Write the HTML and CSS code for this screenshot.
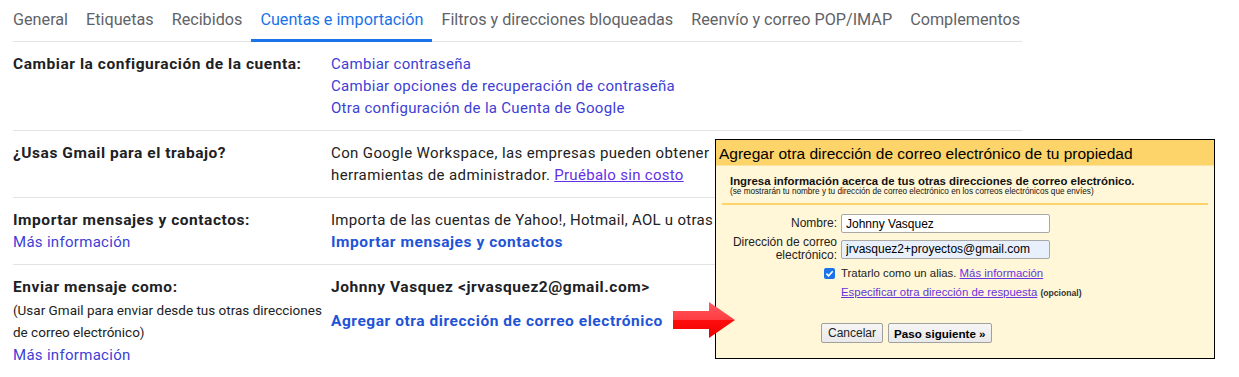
FILE: index.html
```html
<!DOCTYPE html>
<html lang="es">
<head>
    <meta charset="UTF-8">
    <title>Configuración - Cuentas e importación</title>
    <link rel="stylesheet" href="styles.css">
</head>
<body>
    <div class="page">
        <div class="tabbar">
            <nav class="tabs">
                <a class="tab">General</a>
                <a class="tab">Etiquetas</a>
                <a class="tab">Recibidos</a>
                <a class="tab active">Cuentas e importación</a>
                <a class="tab">Filtros y direcciones bloqueadas</a>
                <a class="tab">Reenvío y correo POP/IMAP</a>
                <a class="tab">Complementos</a>
            </nav>
        </div>

        <div class="settings">
            <div class="row">
                <div class="label"><span class="title">Cambiar la configuración de la cuenta:</span></div>
                <div class="value">
                    <a class="link">Cambiar contraseña</a><br>
                    <a class="link">Cambiar opciones de recuperación de contraseña</a><br>
                    <a class="link">Otra configuración de la Cuenta de Google</a>
                </div>
            </div>

            <div class="row">
                <div class="label"><span class="title">¿Usas Gmail para el trabajo?</span></div>
                <div class="value">
                    <span class="wide">Con Google Workspace, las empresas pueden obtener</span><br>
                    <span class="wide">herramientas de administrador.</span> <a class="link-visited">Pruébalo sin costo</a>
                </div>
            </div>

            <div class="row">
                <div class="label">
                    <span class="title">Importar mensajes y contactos:</span><br>
                    <a class="link">Más información</a>
                </div>
                <div class="value">
                    <span class="wide narrow">Importa de las cuentas de Yahoo!, Hotmail, AOL u otras</span><br>
                    <a class="link-strong">Importar mensajes y contactos</a>
                </div>
            </div>

            <div class="row">
                <div class="label">
                    <span class="title">Enviar mensaje como:</span>
                    <div class="hint">(Usar Gmail para enviar desde tus otras direcciones<br>de correo electrónico)</div>
                    <a class="link more">Más información</a>
                </div>
                <div class="value">
                    <div class="title">Johnny Vasquez &lt;jrvasquez2@gmail.com&gt;</div>
                    <a class="link-strong add-address">Agregar otra dirección de correo electrónico</a>
                </div>
            </div>
        </div>

        <div class="dialog">
            <div class="dialog-title">Agregar otra dirección de correo electrónico de tu propiedad</div>
            <div class="dialog-body">
                <div class="intro">
                    <div class="intro-head">Ingresa información acerca de tus otras direcciones de correo electrónico.</div>
                    <div class="intro-note">(se mostrarán tu nombre y tu dirección de correo electrónico en los correos electrónicos que envíes)</div>
                </div>
                <div class="rule"></div>

                <div class="form">
                    <span class="form-label">Nombre:</span>
                    <input class="field" type="text" value="Johnny Vasquez">

                    <span class="form-label">Dirección de correo<br>electrónico:</span>
                    <input class="field autofilled" type="text" value="jrvasquez2+proyectos@gmail.com">

                    <span class="check">
                        <svg width="11" height="11" viewBox="0 0 11 11"><path d="M2.4 5.6 L4.6 7.8 L8.7 3.3" fill="none" stroke="#fff" stroke-width="1.6"/></svg>
                    </span>
                    <div class="form-text">Tratarlo como un alias. <a class="dlg-link">Más información</a></div>

                    <span></span>
                    <div class="form-text"><a class="dlg-link">Especificar otra dirección de respuesta</a> <span class="optional">(opcional)</span></div>
                </div>

                <div class="actions">
                    <button class="btn">Cancelar</button>
                    <button class="btn primary">Paso siguiente »</button>
                </div>
            </div>
        </div>

        <svg class="arrow" width="63" height="37" viewBox="0 0 63 37">
            <defs>
                <linearGradient id="arrowFill" x1="0" y1="0" x2="0" y2="1">
                    <stop offset="0" stop-color="#ff5a5f"/>
                    <stop offset="0.5" stop-color="#ff3c42"/>
                    <stop offset="0.5" stop-color="#ff0d0d"/>
                    <stop offset="1" stop-color="#ee0000"/>
                </linearGradient>
            </defs>
            <polygon points="0,9 36,9 36,0 62,18 36,36 36,27 0,27" fill="url(#arrowFill)"/>
        </svg>
    </div>
</body>
</html>
```

FILE: styles.css
```css
body {
    margin: 0;
    background: #fff;
    color: #202124;
    font-family: Roboto, "Liberation Sans", Arial, sans-serif;
    overflow: hidden;
}
.page {
    position: relative;
    height: 377px;
    padding-left: 13px;
}

/* tabs */
.tabbar {
    width: 1009px;
    border-bottom: 1px solid #e3e3e3;
}
.tabs {
    display: flex;
    margin-left: -9px;
}
.tab {
    padding: 0 9px;
    line-height: 40px;
    height: 39px;
    font-size: 16.2px;
    color: #5f6368;
    border-bottom: 3px solid transparent;
    margin-bottom: -1px;
    white-space: nowrap;
}
.tab.active {
    color: #1a73e8;
    border-bottom-color: #1a73e8;
}

/* settings rows */
.settings {
    width: 1009px;
    overflow: hidden;
}
.row {
    display: grid;
    grid-template-columns: 318px 1fr;
    padding: 11px 0;
    border-top: 1px solid #e3e3e3;
    font-size: 15px;
    line-height: 22px;
}
.row:first-child {
    border-top: 0;
}
.value {
    white-space: nowrap;
    color: #222;
}
.wide {
    letter-spacing: 0.38px;
}
.wide.narrow {
    letter-spacing: 0.28px;
}
.title {
    font-weight: bold;
    font-size: 15.5px;
    letter-spacing: 0.55px;
    color: #202124;
}
.link {
    color: #3d40d6;
    letter-spacing: 0.3px;
}
.link-visited {
    color: #6430e6;
    letter-spacing: 0.3px;
    text-decoration: underline;
}
.link-strong {
    color: #1f54d6;
    font-weight: bold;
    font-size: 15.5px;
    letter-spacing: 0.55px;
}
.hint {
    font-size: 13.5px;
    line-height: 22px;
    margin-top: 1px;
    color: #222;
}
.more {
    display: block;
    margin-top: 1px;
}
.add-address {
    display: block;
    margin-top: 12px;
}

/* dialog */
.dialog {
    position: absolute;
    left: 715px;
    top: 139px;
    width: 500px;
    height: 220px;
    box-sizing: border-box;
    border: 1px solid #000;
    background: #fff7d7;
    font-family: "Liberation Sans", Arial, sans-serif;
    font-size: 12px;
    color: #000;
}
.dialog-title {
    height: 26px;
    line-height: 27px;
    padding-left: 3px;
    background: #fdd46a;
    border-bottom: 1px solid #fde3a0;
    box-sizing: border-box;
    font-size: 15.5px;
    white-space: nowrap;
}
.dialog-body {
    padding: 0 6px;
}
.intro {
    padding: 10px 8px 0;
    color: #111;
}
.intro-head {
    font-weight: bold;
    font-size: 11.4px;
    line-height: 11px;
}
.intro-note {
    font-size: 8.2px;
    line-height: 9px;
    white-space: nowrap;
}
.rule {
    height: 2px;
    margin-top: 7px;
    background: #fdd46a;
}
.form {
    display: grid;
    grid-template-columns: 115px 209px;
    grid-template-rows: 19px 26px 16px 16px;
    column-gap: 4px;
    row-gap: 3px;
    align-items: center;
    margin-top: 9px;
}
.form-label {
    text-align: right;
    line-height: 13px;
    color: #222;
}
.field {
    box-sizing: border-box;
    width: 209px;
    height: 19px;
    margin: 0;
    padding: 0 4px;
    border: 1px solid #a8a8a8;
    border-radius: 2px;
    background: #fff;
    font-family: "Liberation Sans", Arial, sans-serif;
    font-size: 12px;
    color: #000;
}
.field.autofilled {
    background: #e8f0fe;
}
.check {
    justify-self: end;
    width: 11px;
    height: 11px;
    margin-right: 2px;
    border-radius: 2px;
    background: #1a73e8;
    display: flex;
}
.form-text {
    white-space: nowrap;
    font-size: 11.4px;
    color: #222;
}
.dlg-link {
    color: #6633dd;
    text-decoration: underline;
}
.optional {
    font-size: 8.6px;
    font-weight: bold;
    color: #333;
}
.actions {
    display: flex;
    gap: 5px;
    padding-left: 99px;
    margin-top: 23px;
}
.btn {
    height: 20px;
    padding: 0 6px;
    border: 1px solid #a0a0a0;
    border-radius: 2px;
    background: linear-gradient(#f6f6f6, #e9e9e9);
    font-family: "Liberation Sans", Arial, sans-serif;
    font-size: 12px;
    color: #222;
}
.btn.primary {
    font-weight: bold;
    font-size: 11.6px;
    padding: 0 5px;
    color: #000;
}

.arrow {
    position: absolute;
    left: 673px;
    top: 302px;
}
```
